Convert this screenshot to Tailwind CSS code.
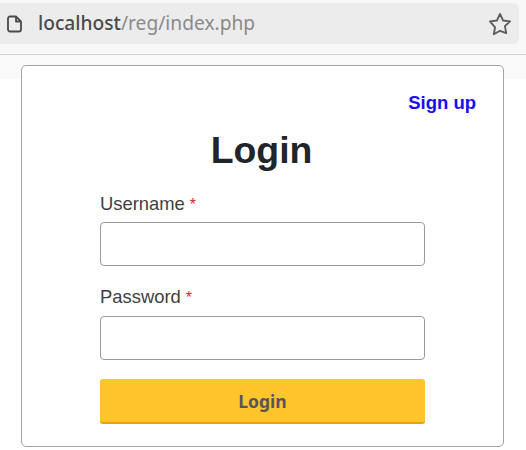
<!DOCTYPE html>
<html lang="en">
<head>
    <meta charset="UTF-8">
    <meta name="viewport" content="width=device-width, initial-scale=1.0">
    <title>Login</title>
    <script src="https://cdn.jsdelivr.net/npm/@tailwindcss/browser@4"></script>
</head>
<body class="h-[450px] w-[526px] overflow-hidden bg-white font-['Liberation_Sans',sans-serif]">
    <!-- browser toolbar -->
    <div class="h-[55px] border-b border-[#d2d2d2] bg-[#f8f8f8] pt-[3px]">
        <div class="flex h-[41px] w-[519px] items-center rounded-r-md bg-[#ececec] pl-[6px] pr-[8px]">
            <svg class="h-[18px] w-[17px]" viewBox="0 0 16 18" fill="none" stroke="#4a4a4a" stroke-width="1.8" stroke-linejoin="round">
                <path d="M1.5 3.5a2 2 0 0 1 2-2h6L14.5 6.5v8a2 2 0 0 1-2 2h-9a2 2 0 0 1-2-2z"/>
                <path d="M9.5 1.5v5h5"/>
            </svg>
            <div class="ml-[15px] font-['Noto_Sans',sans-serif] text-[19.2px] text-[#8a8a8a]"><span class="font-medium text-[#4a4a4a]">localhost</span>/reg/index.php</div>
            <svg class="ml-auto mr-[-1px] h-[24px] w-[24px]" viewBox="0 0 22 22" fill="none" stroke="#5c5c5c" stroke-width="1.7" stroke-linejoin="round">
                <path d="M11 1.8l2.8 6 6.4.8-4.7 4.4 1.2 6.4L11 17.2l-5.7 3.2 1.2-6.4L1.8 8.6l6.4-.8z"/>
            </svg>
        </div>
    </div>

    <div class="h-[24px] bg-[#f9f9f9]"></div>

    <!-- login card -->
    <div class="absolute left-[21px] top-[65px] h-[382px] w-[483px] rounded-[5px] border border-[#a3a3a3] bg-white">
        <div class="flex justify-end pr-[27px] pt-[26px]">
            <a href="#" class="text-[18.5px] leading-[22px] font-bold text-[#1a0dee]">Sign up</a>
        </div>
        <h1 class="mt-[14px] pr-[2px] text-center text-[37.4px] leading-[44px] font-bold text-[#212529]">Login</h1>
        <form class="mx-[78px] mt-[20px] w-[325px]">
            <label class="flex items-baseline gap-[5px] text-[18.4px] leading-[24px] text-[#3f3f3f]">Username <span class="text-[16px] text-[#e0202f]">*</span></label>
            <input type="text" class="mt-[5px] block h-[44px] w-full rounded-[4px] border border-[#9b9b9b] bg-white">
            <label class="mt-[19px] flex items-baseline gap-[5px] text-[18.4px] leading-[24px] text-[#3f3f3f]">Password <span class="text-[16px] text-[#e0202f]">*</span></label>
            <input type="password" class="mt-[6px] block h-[44px] w-full rounded-[4px] border border-[#9b9b9b] bg-white">
            <button type="button" class="mt-[19px] block h-[45px] w-full rounded-[3px] border-b-2 border-[#e8a20c] bg-[#ffc52a] pt-[2px] font-['Noto_Sans',sans-serif] text-[17.5px] font-bold text-[#55555a]">Login</button>
        </form>
    </div>
</body>
</html>
